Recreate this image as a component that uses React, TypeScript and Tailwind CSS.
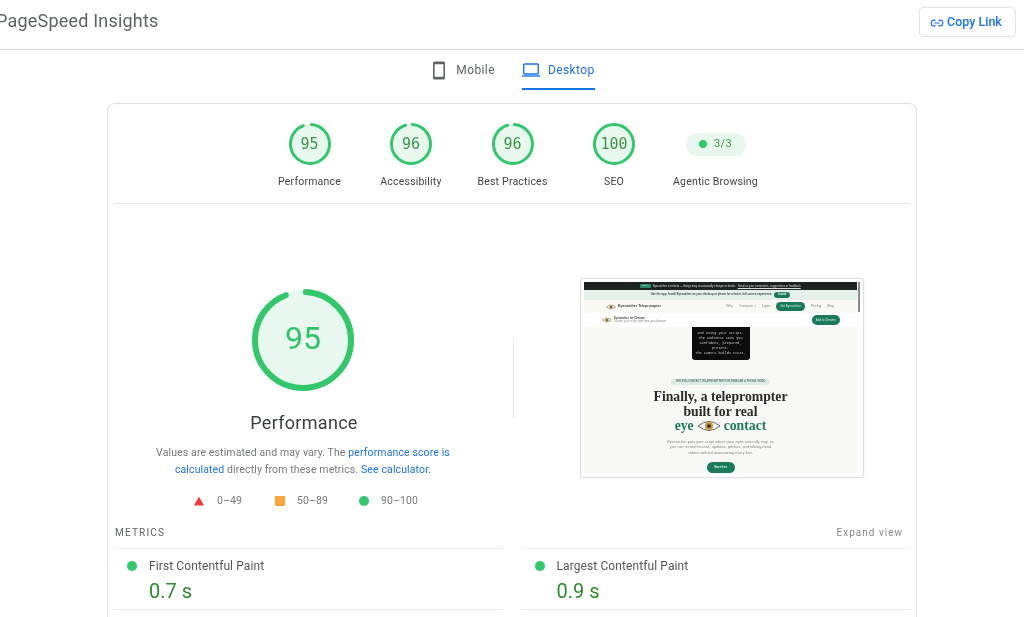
import { Link2 } from "lucide-react";

const categories = [
  { name: "Performance", score: 95 },
  { name: "Accessibility", score: 96 },
  { name: "Best Practices", score: 96 },
  { name: "SEO", score: 100 },
];

const metrics = [
  { name: "First Contentful Paint", value: "0.7 s" },
  { name: "Largest Contentful Paint", value: "0.9 s" },
];

function Gauge({ score, size, stroke }: { score: number; size: number; stroke: number }) {
  const r = (size - stroke) / 2;
  const circ = 2 * Math.PI * r;
  return (
    <svg width={size} height={size} viewBox={`0 0 ${size} ${size}`} className="-rotate-90">
      <circle cx={size / 2} cy={size / 2} r={r + stroke / 2 - 0.5} fill="#e9f8ef" />
      <circle
        cx={size / 2}
        cy={size / 2}
        r={r}
        fill="none"
        stroke="#33c76b"
        strokeWidth={stroke}
        strokeLinecap="round"
        strokeDasharray={`${(circ * score) / 100 - (score < 100 ? stroke : 0)} ${circ}`}
        strokeDashoffset={score < 100 ? -stroke / 2 : 0}
      />
    </svg>
  );
}

function TinyEye() {
  return (
    <svg width="10" height="6" viewBox="0 0 10 6" className="mr-[2px] shrink-0">
      <path d="M0.5 3Q5 -1 9.5 3Q5 7 0.5 3Z" fill="#f3efe2" stroke="#6b5c3a" strokeWidth="0.5" />
      <circle cx="5" cy="3" r="1.6" fill="#b08a3e" />
      <circle cx="5" cy="3" r="0.7" fill="#2a2015" />
    </svg>
  );
}

function PreviewPage() {
  return (
    <div className="flex h-[191px] w-[273px] flex-col overflow-hidden bg-[#f8f8f4] font-['Liberation_Sans',sans-serif] blur-[0.4px]">
      <div className="flex h-[8px] shrink-0 items-center justify-center gap-[2px] bg-[#1c2321] text-[2.85px] text-[#d8dedb]">
        <span className="rounded-[1px] bg-[#2a8a68] px-[2px] text-[2.5px]">BETA</span>
        <span>Eyecatcher is in beta — things may occasionally change or break.</span>
        <span className="underline">Send us your comments, suggestions or feedback</span>
      </div>
      <div className="flex h-[10px] shrink-0 items-center justify-center gap-[2px] bg-[#e6f0eb] text-[2.75px] font-bold text-[#3d4a45]">
        <span>Use the app: Install Eyecatcher on your desktop or phone for a faster, full-screen experience.</span>
        <span className="rounded-full bg-[#1b7a5c] px-[4px] py-[0.5px] text-[#e9f5f0]">Install</span>
      </div>
      <div className="flex h-[13px] shrink-0 items-center pl-[22px] pr-[23px]">
        <TinyEye />
        <span className="text-[3.6px] font-bold text-[#444]">Eyecatcher Teleprompter</span>
        <div className="ml-auto flex items-center gap-[6px] text-[3.4px] text-[#888]">
          <span>Why</span>
          <span>Compare ∨</span>
          <span>Login</span>
          <span className="rounded-full bg-[#1b7a5c] px-[4px] py-[2.5px] text-[3px] text-[#d4ece3]">Get Eyecatcher</span>
          <span>Pricing</span>
          <span>Blog</span>
        </div>
      </div>
      <div className="flex h-[14px] shrink-0 items-center bg-white pl-[18px] pr-[17px]">
        <TinyEye />
        <div className="flex flex-col text-[2.8px] leading-[3.5px] text-[#888]">
          <span className="font-bold text-[#444]">Eyecatcher for Chrome</span>
          <span>Launch your script right from your browser</span>
        </div>
        <span className="ml-auto rounded-full bg-[#1b7a5c] px-[4px] py-[2.5px] text-[3px] text-[#d4ece3]">Add to Chrome</span>
      </div>
      <div className="flex flex-1 flex-col items-center">
        <div className="flex h-[33px] w-[58px] flex-col items-center justify-center rounded-b-[3px] bg-[#0c0c0c] text-center font-['Liberation_Mono',monospace] text-[3.5px] leading-[5px] text-[#c9c9c9]">
          <span>and using your script.</span>
          <span>The audience sees you</span>
          <span>confident, prepared,</span>
          <span>present.</span>
          <span>The camera builds trust.</span>
        </div>
        <div className="mt-[19px] rounded-full bg-[#dcebe4] px-[5px] py-[1px] text-[2.7px] font-bold leading-[4px] text-[#5a7a6d]">
          THE EYE-CONTACT TELEPROMPTER FOR WEBCAM &amp; PHONE VIDEO
        </div>
        <div className="mt-[5px] text-center font-['Liberation_Serif',serif] text-[13.7px] font-bold leading-[14.5px] text-[#2a2a2a]">
          <div>Finally, a teleprompter</div>
          <div>built for real</div>
          <div className="flex items-center justify-center gap-[3px] text-[#1f7a5c]">
            <span>eye</span>
            <svg width="24" height="12" viewBox="0 0 24 12">
              <path d="M1 6 Q12 -3 23 6 Q12 15 1 6Z" fill="#f7f7f3" stroke="#444" strokeWidth="0.8" />
              <circle cx="12" cy="6" r="4" fill="#c9963c" />
              <circle cx="12" cy="6" r="1.8" fill="#2a2015" />
            </svg>
            <span>contact</span>
          </div>
        </div>
        <div className="mt-[5px] whitespace-nowrap text-center text-[3.9px] leading-[5.5px] text-[#888]">
          Eyecatcher puts your script where your eyes naturally stay, so
          <br />
          you can record lessons, updates, pitches, and talking-head
          <br />
          videos without memorizing every line.
        </div>
        <div className="mt-[7px] flex h-[11px] w-[28px] items-center justify-center rounded-full bg-[#1b7a5c] text-[3px] font-bold text-[#d4ece3]">
          Start free
        </div>
      </div>
    </div>
  );
}

export default function App() {
  return (
    <div className="h-[617px] overflow-hidden bg-white font-['Roboto',sans-serif] text-[#444] blur-[0.3px]">
      <header className="flex h-[50px] items-center justify-between border-b border-[#dcdcdc] pr-[8px]">
        <h1 className="-ml-[4px] -mt-[7px] text-[18px] leading-6 tracking-[0.2px] text-[#5f6368]">PageSpeed Insights</h1>
        <button className="-mt-[5px] flex h-[30px] w-[97px] items-center gap-[3px] rounded-[4px] border border-[#e3e5e8] pl-[10px] pt-[1px] text-[12.5px] font-medium text-[#1a73e8]">
          <Link2 size={14} strokeWidth={2} />
          Copy Link
        </button>
      </header>

      <nav className="flex h-[40px] justify-center gap-[27px] pt-[2px] pl-[3px] text-[12px] tracking-[0.4px]">
        <div className="flex h-[38px] items-center gap-[10px] pb-[2px] text-[#5f6368]">
          <svg width="14" height="19" viewBox="0 0 14 19" className="text-[#5f6368]">
            <path
              fillRule="evenodd"
              d="M2.5 0.5h9a1.5 1.5 0 0 1 1.5 1.5v15a1.5 1.5 0 0 1-1.5 1.5h-9A1.5 1.5 0 0 1 1 17V2a1.5 1.5 0 0 1 1.5-1.5ZM2.6 3.2v12.6h8.8V3.2Z"
              fill="currentColor"
            />
          </svg>
          Mobile
        </div>
        <div className="flex h-[38px] items-center gap-[8px] border-b-2 border-[#1a73e8] text-[#1a73e8]">
          <svg width="18" height="16" viewBox="0 0 18 16">
            <rect x="1.7" y="2" width="14.6" height="10" rx="1" fill="none" stroke="currentColor" strokeWidth="1.4" />
            <path d="M0 14h18" stroke="currentColor" strokeWidth="1.4" />
          </svg>
          Desktop
        </div>
      </nav>

      <main className="mx-auto mt-[13px] w-[810px] rounded-t-[8px] border border-[#dfe1e5] px-[6px] pb-[40px] pt-[19px]">
        <section className="flex h-[81px] justify-center border-b border-[#e8e8e8] pl-[1px]">
          {categories.map((c) => (
            <div key={c.name} className="flex w-[101.5px] flex-col items-center">
              <div className="relative h-[42px] w-[42px]">
                <Gauge score={c.score} size={42} stroke={3} />
                <span className="absolute inset-0 flex items-center justify-center pt-[1px] font-['DejaVu_Sans_Mono',monospace] text-[15px] text-[#3a9646]">
                  {c.score}
                </span>
              </div>
              <span className="mt-[10px] whitespace-nowrap text-[10.5px] leading-[14px] tracking-[0.2px]">{c.name}</span>
            </div>
          ))}
          <div className="flex w-[101.5px] flex-col items-center">
            <div className="flex h-[42px] items-center">
              <div className="flex h-[23px] w-[60px] items-center justify-center gap-[7px] rounded-full bg-[#e9f8ef] text-[11px] tracking-[0.3px] text-[#3a9646]">
                <span className="h-[8px] w-[8px] rounded-full bg-[#33c76b]" />
                3/3
              </div>
            </div>
            <span className="mt-[10px] whitespace-nowrap text-[10.5px] leading-[14px] tracking-[0.2px]">Agentic Browsing</span>
          </div>
        </section>

        <section className="flex h-[316px]">
          <div className="flex w-[378px] flex-col items-center pt-[85px]">
            <div className="relative h-[102px] w-[102px]">
              <Gauge score={95} size={102} stroke={6} />
              <span className="absolute inset-0 flex items-center justify-center pb-[5px] text-[32px] font-normal text-[#2fc36a]">95</span>
            </div>
            <h2 className="mt-[20px] pl-[2px] text-[18px] leading-6 tracking-[0.3px] text-[#3c4043]">Performance</h2>
            <p className="mt-[9px] w-[320px] text-center text-[10.5px] leading-[17px] tracking-[0.12px] text-[#75787c]">
              Values are estimated and may vary. The <a className="text-[#1a73e8]">performance score is</a>
              <br />
              <a className="text-[#1a73e8]">calculated</a> directly from these metrics. <a className="text-[#1a73e8]">See calculator.</a>
            </p>
            <div className="mt-[16px] flex h-[14px] items-center pl-[6px] text-[10.5px] tracking-[0.1px] text-[#75787c]">
              <svg width="10" height="10" viewBox="0 0 10 10" className="mr-[13px]">
                <path d="M5 0.5L10 9.5H0Z" fill="#eb3a3a" />
              </svg>
              <span className="mr-[33px]">0–49</span>
              <span className="mr-[12px] h-[10px] w-[10px] bg-[#f9a63a]" />
              <span className="mr-[31px]">50–89</span>
              <span className="mr-[12px] h-[10px] w-[10px] rounded-full bg-[#33c76b]" />
              <span>90–100</span>
            </div>
          </div>
          <div className="ml-[21px] mt-[133px] h-[81px] w-px bg-[#e8e8e8]" />
          <div className="ml-[66px] mt-[74px] h-[200px] w-[284px] rounded-[2px] border border-[#e0e0e0] pl-[3px] pt-[3px] shadow-[0_0_2px_rgba(0,0,0,0.08)]">
            <div className="flex">
              <PreviewPage />
              <div className="ml-[1px] h-[30px] w-[2px] bg-[#8a8a8a]" />
            </div>
          </div>
        </section>

        <section>
          <div className="flex h-[28px] items-center justify-between px-[1px] pb-[3px] text-[10px] tracking-[1.2px] text-[#5f6368]">
            <span>METRICS</span>
            <span className="mr-[6px] tracking-[1px] text-[#85888c]">Expand view</span>
          </div>
          <div className="grid grid-cols-2 gap-x-[19px]">
            {metrics.map((m) => (
              <div key={m.name} className="h-[62px] border-y border-[#ececec] pl-[13px]">
                <div className="mt-[9px] flex items-center gap-[12px] text-[12px] leading-[16px] tracking-[0.1px] text-[#555]">
                  <span className="h-[10px] w-[10px] rounded-full bg-[#33c76b]" />
                  {m.name}
                </div>
                <div className="ml-[22px] mt-[4px] text-[20px] leading-[26px] text-[#2e8b2e]">{m.value}</div>
              </div>
            ))}
          </div>
        </section>
      </main>
    </div>
  );
}
